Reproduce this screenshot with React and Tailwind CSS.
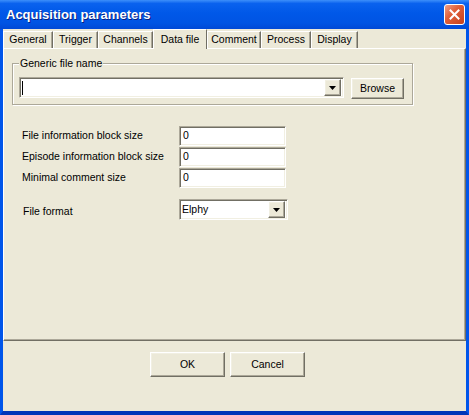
const tabs = [
  { label: 'General', w: 'w-[50px]' },
  { label: 'Trigger', w: 'w-[45px]' },
  { label: 'Channels', w: 'w-[55px]' },
  { label: 'Data file', w: 'w-[54px]', active: true },
  { label: 'Comment', w: 'w-[54px]' },
  { label: 'Process', w: 'w-[50px]' },
  { label: 'Display', w: 'w-[47px]' },
];

const sunken =
  'border border-t-[#aca899] border-l-[#aca899] border-r-white border-b-white shadow-[inset_1px_1px_0_#716f64,inset_-1px_-1px_0_#f1efe2]';

const raised =
  'border border-t-white border-l-white border-r-[#716f64] border-b-[#716f64] shadow-[inset_-1px_-1px_0_#aca899,inset_1px_1px_0_#f1efe2] bg-[#ece9d8]';

const DropButton = () => (
  <div className={`flex h-[17px] w-[17px] items-center justify-center ${raised}`}>
    <svg width="7" height="4" viewBox="0 0 7 4">
      <path d="M0 0h7L3.5 4z" fill="#000" />
    </svg>
  </div>
);

const TextField = ({ value }) => (
  <div className={`flex h-[20px] w-[107px] items-center bg-white pl-[3px] text-[10.5px] text-black ${sunken}`}>
    {value}
  </div>
);

const Button = ({ children, className = '' }) => (
  <button className={`flex items-center justify-center text-[10.5px] text-black ${raised} ${className}`}>
    {children}
  </button>
);

export default function App() {
  return (
    <div className="flex h-[415px] w-[469px] flex-col bg-[#0054e3] font-['Liberation_Sans',Arial,sans-serif]">
      <div className="flex h-[29px] items-center justify-between bg-[linear-gradient(#3d8ffa_0%,#0a62ee_12%,#0058e8_45%,#0054e3_80%,#0049d6_100%)] pl-[6px] pr-[4px]">
        <span className="text-[13px] font-bold text-white [text-shadow:1px_1px_0_#0a1f80]">
          Acquisition parameters
        </span>
        <div className="flex h-[21px] w-[21px] items-center justify-center rounded-[3px] border border-white bg-[linear-gradient(135deg,#f0a088_0%,#e0603a_40%,#c5401c_100%)]">
          <svg width="11" height="11" viewBox="0 0 11 11">
            <path d="M1.5 1.5l8 8M9.5 1.5l-8 8" stroke="#fff" strokeWidth="2" strokeLinecap="square" />
          </svg>
        </div>
      </div>

      <div className="flex flex-1 flex-col border-x-[3px] border-b-[4px] border-x-[#0055ea] border-b-[#0036b8] bg-[#ece9d8]">
        <div className="flex h-[19px] items-end">
          {tabs.map((t) =>
            t.active ? (
              <div
                key={t.label}
                className={`relative z-10 -mb-px flex h-[20px] ${t.w} items-start justify-center border-l border-t border-r border-l-white border-t-white border-r-[#716f64] bg-[#ece9d8] pt-[2px] text-[10.5px] text-black`}
              >
                {t.label}
              </div>
            ) : (
              <div
                key={t.label}
                className={`flex h-[17px] ${t.w} items-center justify-center border-l border-t border-r border-l-white border-t-white border-r-[#716f64] text-[10.5px] text-black shadow-[inset_-1px_0_0_#aca899]`}
              >
                {t.label}
              </div>
            )
          )}
        </div>

        <div className="flex h-[293px] flex-col border border-l-white border-t-white border-r-[#716f64] border-b-[#716f64] shadow-[inset_-1px_-1px_0_#aca899]">
          <div className="relative ml-[8px] mt-[14px] flex h-[42px] w-[401px] items-start gap-[7px] border border-[#aca899] pl-[6px] pt-[13px] shadow-[inset_1px_1px_0_#fff,1px_1px_0_#fff]">
            <span className="absolute left-[6px] top-[-7px] bg-[#ece9d8] px-[1px] text-[10.5px] leading-[12px] text-black">
              Generic file name
            </span>
            <div className={`flex h-[21px] w-[325px] items-center justify-between bg-white pl-[2px] pr-[2px] ${sunken}`}>
              <div className="h-[14px] w-px bg-black" />
              <DropButton />
            </div>
            <Button className="mt-px h-[21px] w-[53px]">Browse</Button>
          </div>

          <div className="ml-[18px] mt-[21px] flex flex-col gap-[1px]">
            {[
              ['File information block size', '0'],
              ['Episode information block size', '0'],
              ['Minimal comment size', '0'],
            ].map(([label, value]) => (
              <div key={label} className="flex items-center">
                <span className="w-[157px] text-[10.5px] text-black">{label}</span>
                <TextField value={value} />
              </div>
            ))}
            <div className="mt-[10px] flex items-center">
              <span className="ml-[1px] mt-[4px] w-[156px] text-[10.5px] text-black">File format</span>
              <div className={`flex h-[21px] w-[109px] items-center justify-between bg-white pl-[2px] pr-[2px] text-[10.5px] text-black ${sunken}`}>
                <span>Elphy</span>
                <DropButton />
              </div>
            </div>
          </div>
        </div>

        <div className="flex gap-[5px] pl-[147px] pt-[11px]">
          <Button className="h-[25px] w-[75px]">OK</Button>
          <Button className="h-[25px] w-[75px]">Cancel</Button>
        </div>
      </div>
    </div>
  );
}
